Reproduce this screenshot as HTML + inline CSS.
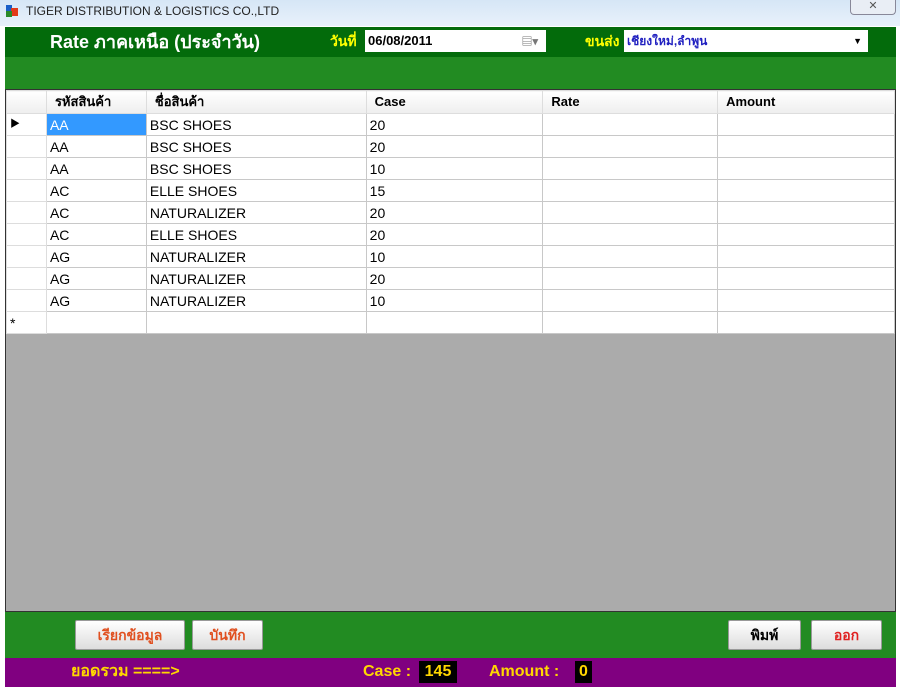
<!DOCTYPE html>
<html><head><meta charset="utf-8"><style>
*{margin:0;padding:0;box-sizing:border-box}
body{width:900px;height:690px;background:#fff;font-family:"Liberation Sans","Noto Sans CJK SC",sans-serif;position:relative;overflow:hidden}
.abs{position:absolute}
.title{left:0;top:0;width:900px;height:26px;background:linear-gradient(#d6e6f6,#e8f1fb)}
.hdr{left:5px;top:27px;width:891px;height:30px;background:#036b0b}
.hdr2{left:5px;top:57px;width:891px;height:32px;background:#228b22}
.grid{left:5px;top:89px;width:891px;height:523px;background:#ababab;border:1px solid #333}
table{border-collapse:collapse;position:absolute;left:0;top:0;font-size:14px}
td{height:22px;border:1px solid #c8c8c8;background:#fff;padding:0 3px;white-space:nowrap;line-height:20px}
tr.h td{height:23px;font-weight:bold;font-size:13px;background:linear-gradient(#fff,#eee);border-color:#ddd;padding-left:8px}
td.sel{background:#3399ff;color:#fff}
td.rh{background:#fff;border-color:#ddd;font-size:10px}
.ft{left:5px;top:612px;width:891px;height:46px;background:#228b22}
.pu{left:5px;top:658px;width:891px;height:29px;background:#800080}
.btn{position:absolute;top:8px;height:30px;background:linear-gradient(#fff,#ddd);border:1px solid #999;border-radius:2px;font-size:14px;font-weight:bold;text-align:center;line-height:28px}
.pt{position:absolute;top:3px;line-height:22px;font-size:16px;font-weight:bold;color:#ffd700}
</style></head><body>
<div class="abs title"></div>
<div class="abs" style="left:6px;top:5px;width:6px;height:6px;background:#1a5fc8"></div>
<div class="abs" style="left:11px;top:8px;width:7px;height:8px;background:#e23a1a"></div>
<div class="abs" style="left:6px;top:11px;width:6px;height:6px;background:#2a8a2a"></div>
<div class="abs" style="left:26px;top:4px;font-size:12px;color:#222">TIGER DISTRIBUTION &amp; LOGISTICS CO.,LTD</div>
<div class="abs" style="left:850px;top:0;width:46px;height:15px;border:1px solid #889;border-top:none;border-radius:0 0 4px 4px;background:#e9eef5;text-align:center;font-size:11px;color:#555;line-height:13px">✕</div>
<div class="abs hdr"></div>
<div class="abs" style="left:50px;top:29px;line-height:26px;font-size:18px;font-weight:bold;color:#fff">Rate ภาคเหนือ (ประจำวัน)</div>
<div class="abs" style="left:330px;top:30px;line-height:22px;font-size:14px;font-weight:bold;color:#ffff00">วันที่</div>
<div class="abs" style="left:365px;top:30px;width:181px;height:22px;background:#fff;font-size:13px;font-weight:bold;padding:3px 3px;color:#000">06/08/2011<span style="position:absolute;right:8px;top:3px;color:#777;font-size:11px">▤▾</span></div>
<div class="abs" style="left:585px;top:30px;line-height:22px;font-size:14px;font-weight:bold;color:#ffff00">ขนส่ง</div>
<div class="abs" style="left:624px;top:30px;width:244px;height:22px;background:#fff;font-size:12px;font-weight:bold;padding:0 3px;line-height:22px;color:#2020c0">เชียงใหม่,ลำพูน<span style="position:absolute;right:6px;top:0;color:#000;font-size:9px">▼</span></div>
<div class="abs hdr2"></div>
<div class="abs grid">
<table>
<tr class="h"><td style="width:40px"></td><td style="width:100px">รหัสสินค้า</td><td style="width:220px">ชื่อสินค้า</td><td style="width:177px">Case</td><td style="width:175px">Rate</td><td style="width:177px">Amount</td></tr>
<tr><td class="rh">▶</td><td class="sel">AA</td><td>BSC SHOES</td><td>20</td><td></td><td></td></tr>
<tr><td class="rh"></td><td>AA</td><td>BSC SHOES</td><td>20</td><td></td><td></td></tr>
<tr><td class="rh"></td><td>AA</td><td>BSC SHOES</td><td>10</td><td></td><td></td></tr>
<tr><td class="rh"></td><td>AC</td><td>ELLE SHOES</td><td>15</td><td></td><td></td></tr>
<tr><td class="rh"></td><td>AC</td><td>NATURALIZER</td><td>20</td><td></td><td></td></tr>
<tr><td class="rh"></td><td>AC</td><td>ELLE SHOES</td><td>20</td><td></td><td></td></tr>
<tr><td class="rh"></td><td>AG</td><td>NATURALIZER</td><td>10</td><td></td><td></td></tr>
<tr><td class="rh"></td><td>AG</td><td>NATURALIZER</td><td>20</td><td></td><td></td></tr>
<tr><td class="rh"></td><td>AG</td><td>NATURALIZER</td><td>10</td><td></td><td></td></tr>
<tr><td class="rh" style="font-size:14px">*</td><td></td><td></td><td></td><td></td><td></td></tr>
</table>
</div>
<div class="abs ft">
<div class="btn" style="left:70px;width:110px;color:#e05020">เรียกข้อมูล</div>
<div class="btn" style="left:187px;width:71px;color:#e05020">บันทึก</div>
<div class="btn" style="left:723px;width:73px;color:#000">พิมพ์</div>
<div class="btn" style="left:806px;width:71px;color:#e02020">ออก</div>
</div>
<div class="abs pu">
<div class="pt" style="left:66px">ยอดรวม ====&gt;</div>
<div class="pt" style="left:358px">Case :</div>
<div class="pt" style="left:414px;width:38px;background:#000;text-align:center">145</div>
<div class="pt" style="left:484px">Amount :</div>
<div class="pt" style="left:570px;width:17px;background:#000;text-align:center">0</div>
</div>
</body></html>
